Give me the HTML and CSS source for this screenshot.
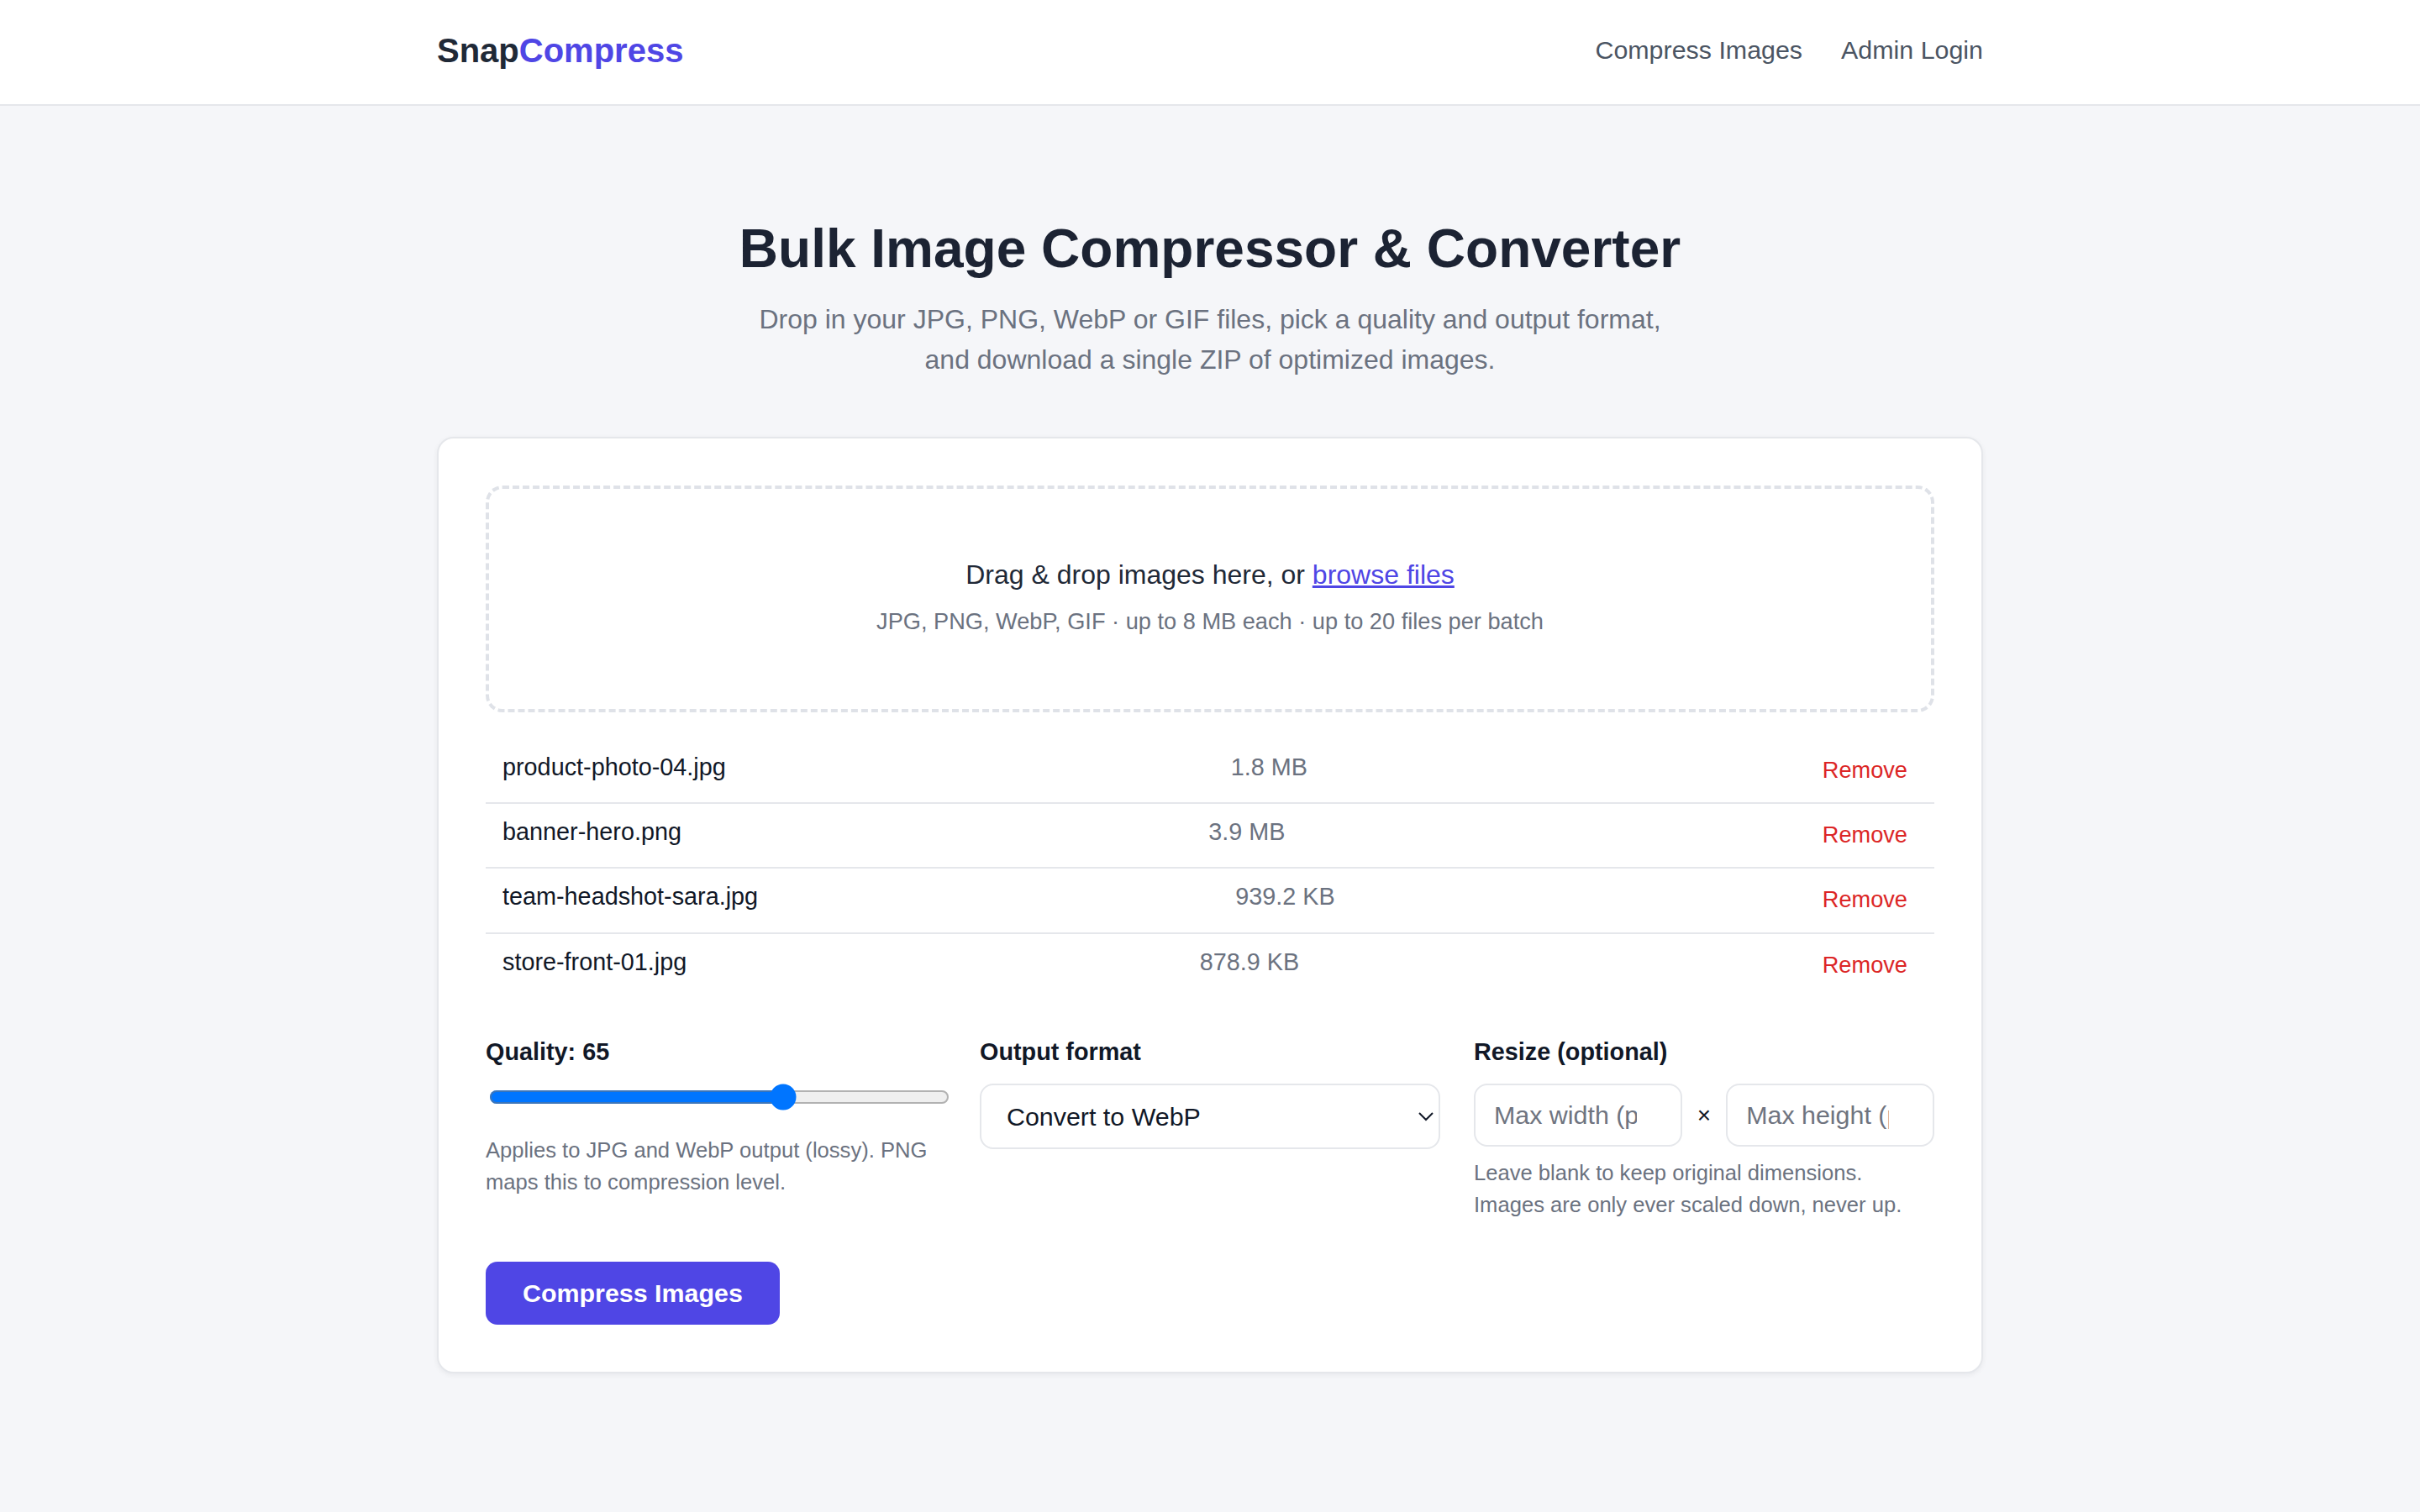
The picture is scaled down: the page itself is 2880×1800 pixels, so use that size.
FILE: index.html
```html
<!DOCTYPE html>
<html lang="en">
<head>
<meta charset="utf-8">
<title>SnapCompress – Bulk Image Compressor</title>
<link rel="stylesheet" href="styles.css">
</head>
<body>
<header class="site-header">
  <div class="container header-inner">
    <a class="logo" href="#">Snap<span class="logo-accent">Compress</span></a>
    <nav class="nav">
      <a href="#">Compress Images</a>
      <a href="#">Admin Login</a>
    </nav>
  </div>
</header>

<main class="container main">
  <h1 class="title">Bulk Image Compressor &amp; Converter</h1>
  <p class="subtitle">Drop in your JPG, PNG, WebP or GIF files, pick a quality and output format, and download a single ZIP of optimized images.</p>

  <section class="card">
    <div class="dropzone">
      <p class="drop-main">Drag &amp; drop images here, or <a href="#" class="browse">browse files</a></p>
      <p class="drop-hint">JPG, PNG, WebP, GIF · up to 8 MB each · up to 20 files per batch</p>
    </div>

    <ul class="file-list">
      <li class="file-row"><span class="file-name">product-photo-04.jpg</span><span class="file-size">1.8 MB</span><button class="remove">Remove</button></li>
      <li class="file-row"><span class="file-name">banner-hero.png</span><span class="file-size">3.9 MB</span><button class="remove">Remove</button></li>
      <li class="file-row"><span class="file-name">team-headshot-sara.jpg</span><span class="file-size">939.2 KB</span><button class="remove">Remove</button></li>
      <li class="file-row"><span class="file-name">store-front-01.jpg</span><span class="file-size">878.9 KB</span><button class="remove">Remove</button></li>
    </ul>

    <div class="controls">
      <div class="field">
        <label class="field-label" for="quality">Quality: 65</label>
        <input class="slider" id="quality" type="range" min="1" max="100" value="65">
        <p class="help help-slider">Applies to JPG and WebP output (lossy). PNG maps this to compression level.</p>
      </div>
      <div class="field">
        <label class="field-label" for="format">Output format</label>
        <select class="select" id="format">
          <option>Convert to WebP</option>
          <option>Keep original format</option>
          <option>Convert to JPG</option>
          <option>Convert to PNG</option>
        </select>
      </div>
      <div class="field">
        <label class="field-label">Resize (optional)</label>
        <div class="resize-row">
          <input class="text-input" type="number" min="1" placeholder="Max width (px)">
          <span class="times">×</span>
          <input class="text-input" type="number" min="1" placeholder="Max height (px)">
        </div>
        <p class="help">Leave blank to keep original dimensions. Images are only ever scaled down, never up.</p>
      </div>
    </div>

    <button class="primary-btn">Compress Images</button>
  </section>
</main>
</body>
</html>
```

FILE: styles.css
```css
html {
  zoom: 2;
}

* {
  box-sizing: border-box;
}

body {
  margin: 0;
  background: #f5f6f9;
  color: #1f2937;
  font-family: "Liberation Sans", Arial, sans-serif;
  font-size: 16px;
  line-height: 1.5;
}

.container {
  max-width: 960px;
  margin: 0 auto;
  padding: 0 20px;
}

.site-header {
  background: #ffffff;
  border-bottom: 1px solid #e5e7eb;
}

.header-inner {
  display: flex;
  align-items: center;
  justify-content: space-between;
  height: 62px;
  padding-bottom: 2px;
}

.logo {
  font-size: 20px;
  font-weight: 700;
  color: #1f2937;
  text-decoration: none;
}

.logo-accent {
  color: #4f46e5;
}

.nav {
  display: flex;
  gap: 23px;
}

.nav a {
  font-size: 15.2px;
  color: #4b5563;
  text-decoration: none;
}

.main {
  padding-top: 65px;
  padding-bottom: 80px;
}

.title {
  margin: 0 0 10px;
  text-align: center;
  font-size: 32px;
  line-height: 1.25;
  font-weight: 700;
  color: #1c2333;
}

.subtitle {
  margin: 0 auto 34px;
  max-width: 560px;
  text-align: center;
  font-size: 16px;
  color: #6b7280;
}

.card {
  background: #ffffff;
  border: 1px solid #e5e7eb;
  border-radius: 10px;
  box-shadow: 0 1px 3px rgba(17, 24, 39, 0.06);
  padding: 28px;
}

.dropzone {
  border: 2px dashed #dfe2e8;
  border-radius: 10px;
  padding: 39px 20px 42px;
  text-align: center;
}

.drop-main {
  margin: 0 0 6px;
  font-size: 16px;
  line-height: 24px;
  color: #1f2937;
}

.browse {
  color: #4f46e5;
  text-decoration: underline;
}

.drop-hint {
  margin: 0;
  font-size: 13.6px;
  line-height: 20px;
  color: #6b7280;
}

.file-list {
  list-style: none;
  margin: 16px 0 0;
  padding: 0;
}

.file-row {
  display: flex;
  align-items: center;
  justify-content: space-between;
  padding: 6px 10px 10px;
  font-size: 14.4px;
  line-height: 21.6px;
  border-bottom: 1px solid #e5e7eb;
}

.file-row:last-child {
  border-bottom: none;
}

.file-name {
  color: #111827;
}

.file-size {
  color: #6b7280;
}

.remove {
  background: none;
  border: none;
  padding: 3px 6px 0;
  font-family: inherit;
  font-size: 13.6px;
  line-height: 18.6px;
  color: #dc2626;
  cursor: pointer;
}

.controls {
  display: grid;
  grid-template-columns: repeat(3, 1fr);
  gap: 20px;
  margin-top: 22px;
}

.field {
  min-width: 0;
}

.field-label {
  display: block;
  margin-bottom: 8px;
  font-size: 14.4px;
  font-weight: 700;
  color: #111827;
}

.slider {
  display: block;
  width: 100%;
  margin: 7px 2px 0;
}

.help {
  margin: 6px 0 0;
  font-size: 12.8px;
  line-height: 1.5;
  color: #6b7280;
}

.help-slider {
  margin-top: 14px;
}

.select {
  display: block;
  width: 100%;
  padding: 9px 11px;
  font-family: inherit;
  font-size: 15.2px;
  color: #111827;
  background: #ffffff;
  border: 1px solid #e5e7eb;
  border-radius: 8px;
}

.resize-row {
  display: flex;
  align-items: center;
  gap: 9px;
}

.text-input {
  flex: 1;
  min-width: 0;
  width: 100%;
  padding: 9px 11px;
  font-family: inherit;
  font-size: 15.2px;
  color: #111827;
  background: #ffffff;
  border: 1px solid #e5e7eb;
  border-radius: 8px;
}

.text-input::placeholder {
  color: #6f7480;
}

.times {
  font-size: 14px;
  color: #111827;
}

.primary-btn {
  display: inline-block;
  margin-top: 24px;
  padding: 10px 22px;
  font-family: inherit;
  font-size: 15.2px;
  font-weight: 700;
  line-height: 1.15;
  color: #ffffff;
  background: #4f46e5;
  border: none;
  border-radius: 7px;
  cursor: pointer;
}
```
